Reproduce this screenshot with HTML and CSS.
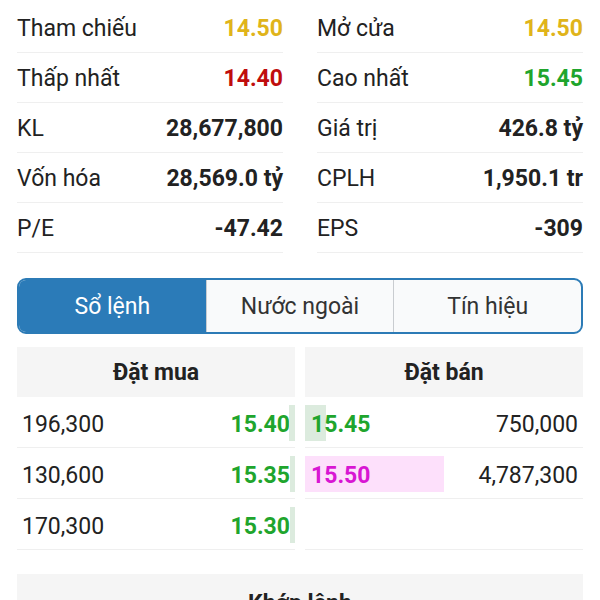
FILE: index.html
```html
<!DOCTYPE html>
<html lang="vi">
<head>
    <meta charset="UTF-8">
    <meta name="viewport" content="width=device-width, initial-scale=1.0">
    <title>Chi tiết cổ phiếu</title>
    <link rel="stylesheet" href="styles.css">
</head>
<body>

    <!-- Stock summary -->
    <div class="summary">
        <div class="summary-col">
            <div class="row"><span>Tham chiếu</span><b class="ref">14.50</b></div>
            <div class="row"><span>Thấp nhất</span><b class="down">14.40</b></div>
            <div class="row"><span>KL</span><b>28,677,800</b></div>
            <div class="row"><span>Vốn hóa</span><b>28,569.0 tỷ</b></div>
            <div class="row"><span>P/E</span><b>-47.42</b></div>
        </div>
        <div class="summary-col">
            <div class="row"><span>Mở cửa</span><b class="ref">14.50</b></div>
            <div class="row"><span>Cao nhất</span><b class="up">15.45</b></div>
            <div class="row"><span>Giá trị</span><b>426.8 tỷ</b></div>
            <div class="row"><span>CPLH</span><b>1,950.1 tr</b></div>
            <div class="row"><span>EPS</span><b>-309</b></div>
        </div>
    </div>

    <!-- Tabs -->
    <div class="tabs">
        <div class="tab active">Sổ lệnh</div>
        <div class="tab">Nước ngoài</div>
        <div class="tab">Tín hiệu</div>
    </div>

    <!-- Order book -->
    <div class="book">
        <div class="book-col buy">
            <div class="book-head">Đặt mua</div>
            <div class="book-row">
                <span class="qty">196,300</span>
                <span class="price up">15.40</span>
                <span class="bar" style="width: 6px"></span>
            </div>
            <div class="book-row">
                <span class="qty">130,600</span>
                <span class="price up">15.35</span>
                <span class="bar" style="width: 5px"></span>
            </div>
            <div class="book-row">
                <span class="qty">170,300</span>
                <span class="price up">15.30</span>
                <span class="bar" style="width: 5px"></span>
            </div>
        </div>
        <div class="book-col sell">
            <div class="book-head">Đặt bán</div>
            <div class="book-row">
                <span class="bar" style="width: 21px"></span>
                <span class="price up">15.45</span>
                <span class="qty">750,000</span>
            </div>
            <div class="book-row">
                <span class="bar ceil" style="width: 139px"></span>
                <span class="price ceil-text">15.50</span>
                <span class="qty">4,787,300</span>
            </div>
            <div class="book-row"></div>
        </div>
    </div>

    <!-- Matched orders -->
    <div class="match-head">Khớp lệnh</div>

</body>
</html>
```

FILE: styles.css
```css
body {
    font-family: Roboto, "Noto Sans", sans-serif;
    color: #222;
    background-color: #fff;
    margin: 0;
    padding: 3px 17px 0;
}

/* Summary */
.summary {
    display: grid;
    grid-template-columns: 1fr 1fr;
    gap: 34px;
}

.row {
    display: flex;
    justify-content: space-between;
    align-items: center;
    box-sizing: border-box;
    height: 50px;
    padding-top: 2px;
    border-bottom: 1px solid #efefef;
    font-size: 23px;
}

.row b {
    font-weight: 700;
}

.ref { color: #e0b41a; }
.down { color: #c00d0d; }
.up { color: #1fa52d; }

/* Tabs */
.tabs {
    display: flex;
    margin-top: 25px;
    height: 52px;
    border: 2px solid #2c7bb6;
    border-radius: 9px;
    overflow: hidden;
    background-color: #f9fafb;
}

.tab {
    flex: 1;
    display: flex;
    justify-content: center;
    align-items: center;
    font-size: 23px;
    color: #333;
    border-left: 1px solid #c9ccd0;
}

.tab:first-child {
    border-left: none;
}

.tab.active {
    background-color: #2b7bb8;
    color: #fff;
}

/* Order book */
.book {
    display: grid;
    grid-template-columns: 1fr 1fr;
    gap: 10px;
    margin-top: 13px;
}

.book-head {
    height: 50px;
    display: flex;
    justify-content: center;
    align-items: center;
    background-color: #f5f5f5;
    font-size: 23px;
    font-weight: 700;
}

.book-row {
    position: relative;
    display: flex;
    justify-content: space-between;
    align-items: center;
    box-sizing: border-box;
    height: 51px;
    padding-top: 4px;
    border-bottom: 1px solid #efefef;
    font-size: 23px;
}

.buy .book-row {
    padding-left: 5px;
}

.sell .book-row {
    padding-right: 5px;
}

.price {
    position: relative;
    font-weight: 700;
}

.buy .price {
    margin-right: 5px;
}

.sell .price {
    margin-left: 6px;
}

.bar {
    position: absolute;
    top: 8px;
    bottom: 6px;
    background-color: #dcebde;
}

.buy .bar {
    right: 0;
}

.sell .bar {
    left: 0;
}

.bar.ceil {
    background-color: #fde0fb;
}

.ceil-text {
    color: #d816d3;
}

/* Matched orders */
.match-head {
    margin-top: 24px;
    height: 50px;
    display: flex;
    justify-content: center;
    align-items: center;
    padding-top: 4px;
    background-color: #f5f5f5;
    font-size: 23px;
    font-weight: 700;
}
```
